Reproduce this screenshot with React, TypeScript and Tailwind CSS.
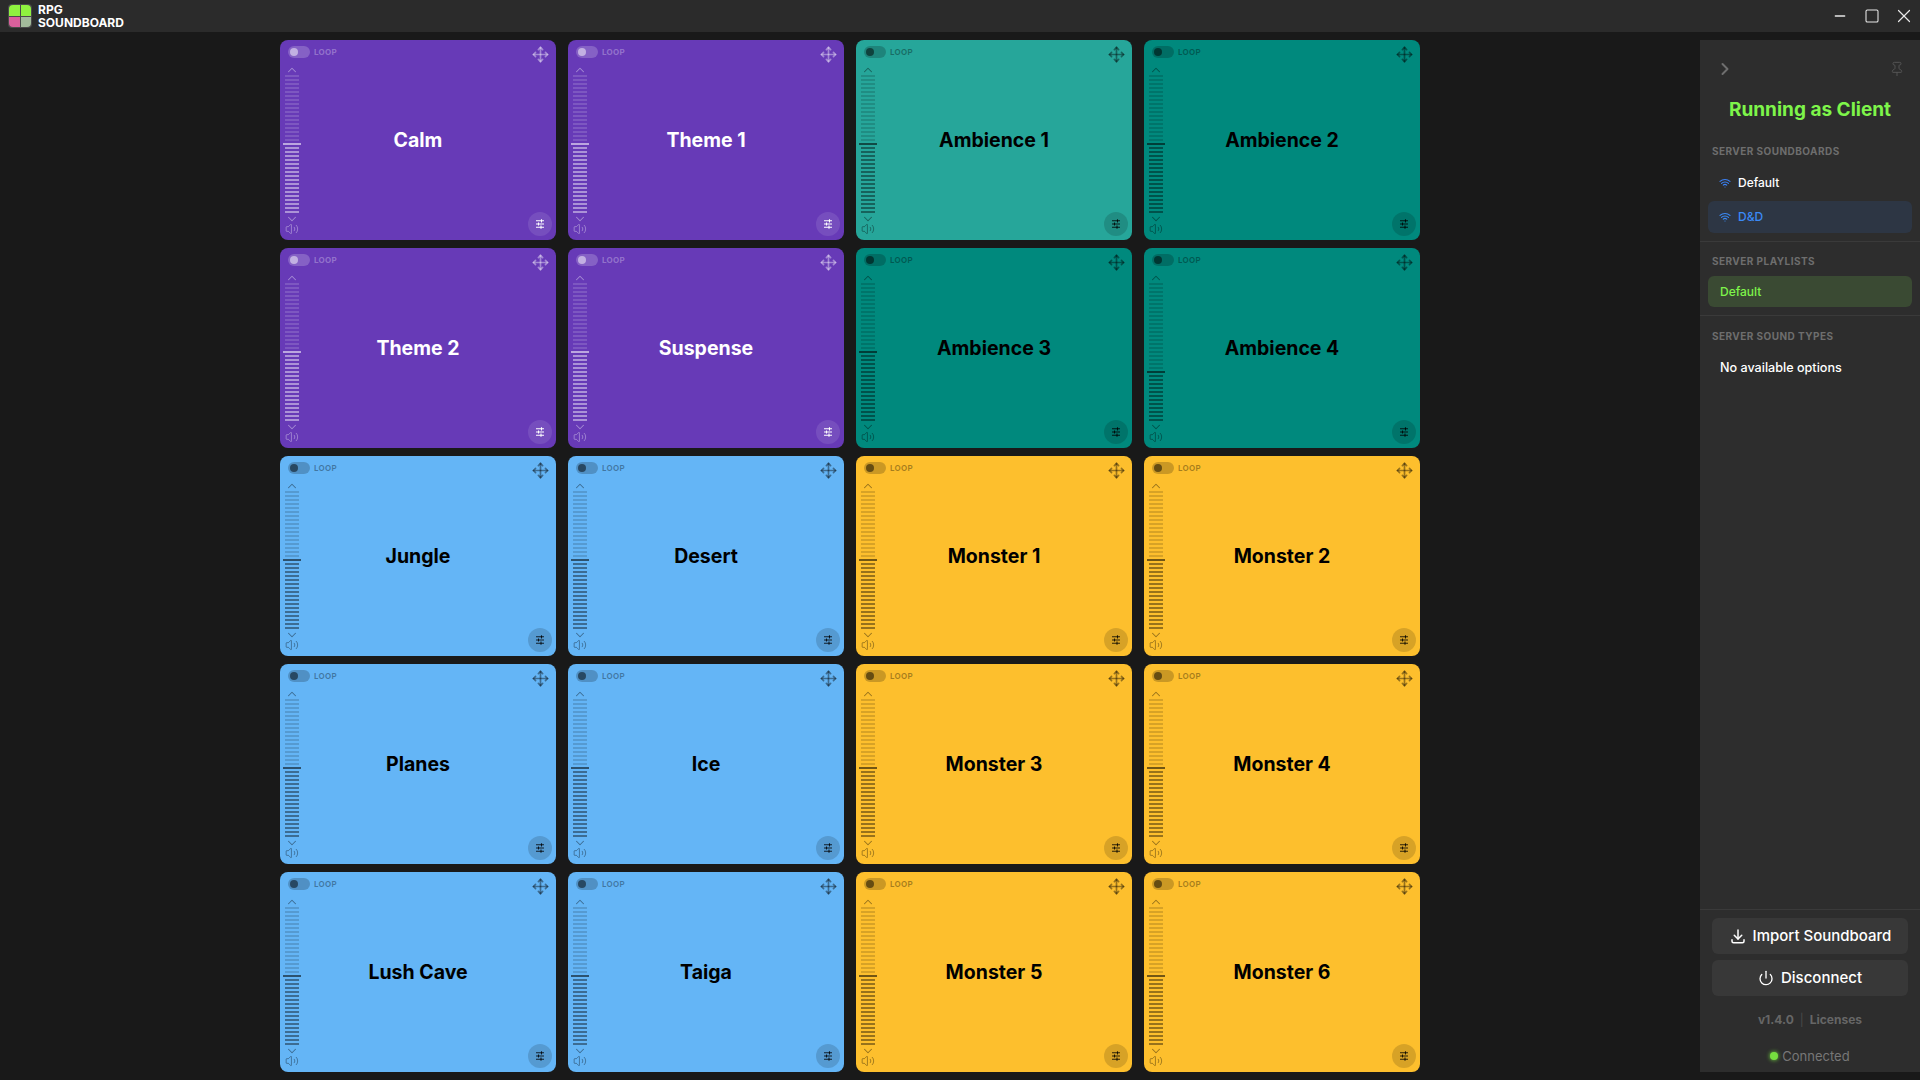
import React from "react";
import { ChevronDown, ChevronRight, ChevronUp, Minus, Move, Pin, Power, Square, Volume2, Wifi, X } from "lucide-react";
import { TbDownload } from "react-icons/tb";

type Tone = {
  bg: string;
  text: string;
  loop: string;
  track: string;
  knob: string;
  ghost: string;
  tick: string;
  tickDim: string;
  thumb: string;
  round: string;
  roundIcon: string;
};

const purple: Tone = {
  bg: "bg-[#673ab7]",
  text: "text-white",
  loop: "text-white/30",
  track: "bg-white/20",
  knob: "bg-white/50",
  ghost: "text-white/40",
  tick: "bg-white/45",
  tickDim: "bg-white/15",
  thumb: "bg-white/55",
  round: "bg-white/10",
  roundIcon: "text-white",
};

const dark = (bg: string): Tone => ({
  bg,
  text: "text-black",
  loop: "text-black/35",
  track: "bg-black/20",
  knob: "bg-black/50",
  ghost: "text-black/40",
  tick: "bg-black/40",
  tickDim: "bg-black/15",
  thumb: "bg-black/55",
  round: "bg-black/15",
  roundIcon: "text-black/80",
});

const teal = dark("bg-[#00897d]");
const tealLight = dark("bg-[#26a69a]");
const blue = dark("bg-[#64b5f6]");
const yellow = dark("bg-[#fdbf2d]");

const sounds: { name: string; tone: Tone; level?: number }[] = [
  { name: "Calm", tone: purple },
  { name: "Theme 1", tone: purple },
  { name: "Ambience 1", tone: tealLight },
  { name: "Ambience 2", tone: teal },
  { name: "Theme 2", tone: purple },
  { name: "Suspense", tone: purple },
  { name: "Ambience 3", tone: teal },
  { name: "Ambience 4", tone: teal, level: 22 },
  { name: "Jungle", tone: blue },
  { name: "Desert", tone: blue },
  { name: "Monster 1", tone: yellow },
  { name: "Monster 2", tone: yellow },
  { name: "Planes", tone: blue },
  { name: "Ice", tone: blue },
  { name: "Monster 3", tone: yellow },
  { name: "Monster 4", tone: yellow },
  { name: "Lush Cave", tone: blue },
  { name: "Taiga", tone: blue },
  { name: "Monster 5", tone: yellow },
  { name: "Monster 6", tone: yellow },
];

const ticks = Array.from({ length: 35 }, (_, i) => i);

function TuneIcon() {
  return (
    <svg width="12" height="12" viewBox="0 0 12 12" fill="none" stroke="currentColor" strokeWidth="1.1">
      <path d="M2 2.8h8M2 6h8M2 9.2h8" />
      <path d="M7.5 1.2v3.2M4.5 4.4v3.2M7 7.6v3.2" />
    </svg>
  );
}

function SoundCard({ name, tone, level = 17 }: { name: string; tone: Tone; level?: number }) {
  return (
    <div className={`relative h-[200px] rounded-lg overflow-hidden ${tone.bg}`}>
      <div className="flex flex-col w-[40px] pl-[3px] pt-[6px]">
        <div className="flex items-center w-[70px] ml-[5px] gap-[4px]">
          <div className={`flex items-center w-[22px] h-[12px] rounded-full pl-[2px] ${tone.track}`}>
            <div className={`w-[8px] h-[8px] rounded-full ${tone.knob}`} />
          </div>
          <span className={`text-[8px] leading-[12px] font-bold tracking-[0.3px] ${tone.loop}`}>LOOP</span>
        </div>
        <ChevronUp size={14} strokeWidth={1.8} className={`ml-[2px] mt-[5px] ${tone.ghost}`} />
        <div className="flex flex-col gap-[2px] mt-[-2px]">
          {ticks.map((i) => (
            <div
              key={i}
              className={
                i === level
                  ? `h-[2px] w-[18px] ${tone.thumb}`
                  : `h-[2px] w-[14px] ml-[2px] ${i < level ? tone.tickDim : tone.tick}`
              }
            />
          ))}
        </div>
        <ChevronDown size={14} strokeWidth={1.8} className={`ml-[2px] mt-[-1px] ${tone.ghost}`} />
        <Volume2 size={14} strokeWidth={1.5} className={`ml-[2px] mt-[-4px] ${tone.ghost}`} />
      </div>
      <div className={`absolute inset-0 flex items-center justify-center pt-[1px] text-[19.5px] font-bold ${tone.text}`}>
        {name}
      </div>
      <Move size={17} strokeWidth={2.4} className={`absolute top-[6px] right-[7px] ${tone.ghost}`} />
      <div className={`absolute right-[4px] bottom-[4px] flex items-center justify-center w-[24px] h-[24px] rounded-full ${tone.round} ${tone.roundIcon}`}>
        <TuneIcon />
      </div>
    </div>
  );
}

function SectionLabel({ children }: { children: React.ReactNode }) {
  return <div className="pl-[12px] text-[10px] leading-[14px] font-bold tracking-[0.45px] text-[#6e6e6e]">{children}</div>;
}

export default function App() {
  return (
    <div className="flex flex-col w-[1920px] h-[1080px] overflow-hidden bg-[#191919] font-[family-name:Inter,sans-serif]">
      <div className="flex items-center justify-between h-[32px] bg-[#2b2b2b] shrink-0">
        <div className="flex items-center pl-[8px] gap-[6px]">
          <div className="grid grid-cols-2 gap-px w-[24px] h-[24px] p-[1px] rounded bg-[#4a4a4a]">
            <div className="rounded-tl-sm bg-[#8ff23f]" />
            <div className="rounded-tr-sm bg-[#8ff23f]" />
            <div className="rounded-bl-sm bg-[#d9609c]" />
            <div className="rounded-br-sm bg-[#a3bb9b]" />
          </div>
          <div className="text-[12px] leading-[13px] font-bold text-white">
            <div>RPG</div>
            <div>SOUNDBOARD</div>
          </div>
        </div>
        <div className="flex items-center text-[#e8e8e8]">
          <div className="flex justify-center w-[32px]"><Minus size={16} strokeWidth={2} /></div>
          <div className="flex justify-center w-[32px]"><Square size={16} strokeWidth={1.6} /></div>
          <div className="flex justify-center w-[32px]"><X size={22} strokeWidth={1.3} /></div>
        </div>
      </div>

      <div className="flex flex-1 pt-[8px] pb-[8px]">
        <div className="flex-1 pl-[280px]">
          <div className="grid grid-cols-[repeat(4,276px)] gap-x-[12px] gap-y-[8px]">
            {sounds.map((s) => (
              <SoundCard key={s.name} name={s.name} tone={s.tone} level={s.level} />
            ))}
          </div>
        </div>

        <div className="flex flex-col w-[220px] bg-[#2d2d2d]">
          <div className="flex items-center justify-between h-[20px] mt-[19px] pl-[15px] pr-[15px] text-[#6e6e6e]">
            <ChevronRight size={20} strokeWidth={2.4} />
            <Pin size={16} strokeWidth={1.5} className="text-[#555555]" />
          </div>
          <div className="mt-[20px] text-center text-[19px] leading-[22px] font-bold text-[#7ef54a]">Running as Client</div>

          <div className="mt-[23px]"><SectionLabel>SERVER SOUNDBOARDS</SectionLabel></div>
          <div className="flex flex-col mt-[9px] px-[8px]">
            <div className="flex items-center gap-[7px] h-[32px] pl-[11px] text-[12px] font-medium text-white">
              <Wifi size={12} strokeWidth={2.2} className="text-[#3b82f6]" />
              Default
            </div>
            <div className="flex items-center gap-[7px] h-[32px] mt-[2px] pl-[11px] rounded-md bg-[#2d3644] text-[12px] font-medium text-[#3b8af6]">
              <Wifi size={12} strokeWidth={2.2} />
              D&amp;D
            </div>
          </div>
          <div className="h-px mt-[8px] bg-[#3a3a3a]" />

          <div className="mt-[12px]"><SectionLabel>SERVER PLAYLISTS</SectionLabel></div>
          <div className="mt-[8px] mx-[8px] flex items-center h-[31px] pl-[12px] rounded-md bg-[#3a4a33] text-[12px] font-medium text-[#7ef54a]">Default</div>
          <div className="h-px mt-[8px] bg-[#3a3a3a]" />

          <div className="mt-[13px]"><SectionLabel>SERVER SOUND TYPES</SectionLabel></div>
          <div className="mt-[17px] pl-[20px] text-[12.6px] leading-[16px] font-medium text-white">No available options</div>

          <div className="flex-1" />
          <div className="h-px bg-[#3a3a3a]" />
          <div className="flex flex-col gap-[6px] mt-[8px] px-[12px]">
            <div className="flex items-center justify-center gap-[6px] h-[36px] rounded-md bg-[#383838] text-[15px] font-medium text-white">
              <TbDownload size={18} />
              Import Soundboard
            </div>
            <div className="flex items-center justify-center gap-[7px] h-[36px] rounded-md bg-[#383838] text-[15px] font-medium text-white">
              <Power size={16} strokeWidth={2} />
              Disconnect
            </div>
          </div>
          <div className="flex items-center justify-center gap-[6px] mt-[16px] text-[12px] leading-[16px] font-bold text-[#666666]">
            <span>v1.4.0</span>
            <span className="font-normal text-[#4a4a4a]">|</span>
            <span>Licenses</span>
          </div>
          <div className="flex items-center justify-center gap-[4px] mt-[20px] mb-[8px] text-[13px] leading-[16px] text-[#777777]">
            <span className="w-[8px] h-[8px] rounded-full bg-[#76e03f] shadow-[0_0_4px_#76e03f]" />
            Connected
          </div>
        </div>
      </div>
    </div>
  );
}
